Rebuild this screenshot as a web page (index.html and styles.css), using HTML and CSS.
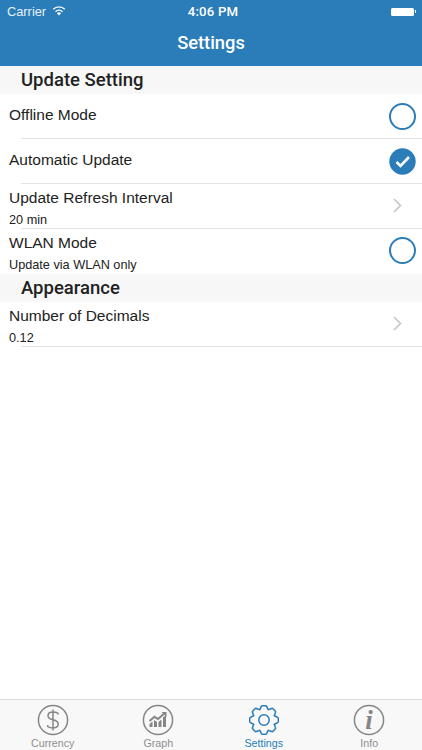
FILE: index.html
```html
<!DOCTYPE html>
<html lang="en">
<head>
<meta charset="utf-8">
<title>Settings</title>
<link rel="stylesheet" href="styles.css">
</head>
<body>
<div class="app">
  <header class="top">
    <div class="status">
      <div class="status-left">
        <span>Carrier</span>
        <svg class="wifi" viewBox="0 0 14 10" width="14" height="10"><path d="M7 9.6 4.9 7.3a3 3 0 0 1 4.2 0z" fill="#fff"/><path d="M3.5 5.7a5 5 0 0 1 7 0M1.2 3.3a8.2 8.2 0 0 1 11.6 0" fill="none" stroke="#fff" stroke-width="1.3"/></svg>
      </div>
      <div class="status-time">4:06 PM</div>
      <div class="status-right">
        <span class="battery"></span><span class="battery-tip"></span>
      </div>
    </div>
    <div class="title">Settings</div>
  </header>
  <main class="list">
    <div class="section">Update Setting</div>
    <div class="row row-single">
      <div class="text"><div class="label">Offline Mode</div></div>
      <span class="radio"></span>
    </div>
    <div class="row row-single">
      <div class="text"><div class="label">Automatic Update</div></div>
      <svg class="check" viewBox="0 0 27 27" width="27" height="27"><circle cx="13.5" cy="13.5" r="13.2" fill="#2a7db8"/><path d="M7.500 14l4 4 8.500-9" fill="none" stroke="#fff" stroke-width="2.600"/></svg>
    </div>
    <div class="row">
      <div class="text"><div class="label">Update Refresh Interval</div><div class="sub">20 min</div></div>
      <svg class="chev" viewBox="0 0 9 15" width="9" height="15"><path d="M1 1l6.5 6.5L1 14" fill="none" stroke="#c7c7cc" stroke-width="1.7"/></svg>
    </div>
    <div class="row row-last">
      <div class="text"><div class="label">WLAN Mode</div><div class="sub">Update via WLAN only</div></div>
      <span class="radio radio-up"></span>
    </div>
    <div class="section">Appearance</div>
    <div class="row">
      <div class="text"><div class="label">Number of Decimals</div><div class="sub">0.12</div></div>
      <svg class="chev" viewBox="0 0 9 15" width="9" height="15"><path d="M1 1l6.5 6.5L1 14" fill="none" stroke="#c7c7cc" stroke-width="1.7"/></svg>
    </div>
  </main>
  <nav class="tabs">
    <div class="tab">
      <svg viewBox="0 0 32 32" width="32" height="32"><circle cx="16" cy="16" r="14.6" fill="none" stroke="#868686" stroke-width="1.5"/><path d="M21 10.500V9.300c-1.200-.9-3-1.300-5-1.300-3 0-5 1.400-5 3.700 0 2.200 1.800 3.300 5 4.100 3.400.8 5.200 1.900 5.200 4.300 0 2.400-2.200 3.900-5.200 3.900-2.200 0-4-.4-5.300-1.500v-1.500M16 5.500v21" fill="none" stroke="#868686" stroke-width="1.500"/></svg>
      <span>Currency</span>
    </div>
    <div class="tab">
      <svg viewBox="0 0 32 32" width="32" height="32"><circle cx="16" cy="16" r="14.6" fill="none" stroke="#868686" stroke-width="1.5"/><path d="M7.500 17l5-4.200 3.500 2.200 6-5.300" fill="none" stroke="#868686" stroke-width="2"/><path d="M19.500 8h5v5z" fill="#868686"/><path d="M7.500 23v-3l3-2.500V23zM12 23v-7l3 2V23zM16.500 23v-5l3-2.500V23zM21 23v-9.500l3-2.500V23z" fill="#868686"/></svg>
      <span>Graph</span>
    </div>
    <div class="tab tab-on">
      <svg viewBox="-16 -16 32 32" width="32" height="32">
        <defs><path id="tooth" d="M10.400-4.300 12.800-3Q14.300-2.800 14.300-1.500V1.500Q14.300 2.800 12.800 3L10.400 4.300" fill="none" stroke="#2a7db8" stroke-width="1.500" stroke-linecap="round"/></defs>
        <use href="#tooth"/>
        <use href="#tooth" transform="rotate(45)"/>
        <use href="#tooth" transform="rotate(90)"/>
        <use href="#tooth" transform="rotate(135)"/>
        <use href="#tooth" transform="rotate(180)"/>
        <use href="#tooth" transform="rotate(225)"/>
        <use href="#tooth" transform="rotate(270)"/>
        <use href="#tooth" transform="rotate(315)"/>
        <circle cx="0" cy="0" r="5.200" fill="none" stroke="#2a7db8" stroke-width="1.500"/>
      </svg>
      <span>Settings</span>
    </div>
    <div class="tab">
      <svg viewBox="0 0 32 32" width="32" height="32"><circle cx="16" cy="16" r="14.6" fill="none" stroke="#868686" stroke-width="1.5"/><text class="info-i" x="16" y="25" text-anchor="middle">i</text></svg>
      <span>Info</span>
    </div>
  </nav>
</div>
</body>
</html>
```
FILE: styles.css
```css
* { box-sizing: border-box; }
html, body { margin: 0; padding: 0; }
body { font-family: "Liberation Sans", Arial, sans-serif; color: #222; background: #fff; }
.app { width: 422px; height: 750px; display: flex; flex-direction: column; overflow: hidden; }
.top { height: 66px; background: #2a7db8; color: #fff; flex: none; }
.status { height: 22px; padding: 1px 6px 0 7px; display: grid; grid-template-columns: 1fr auto 1fr; align-items: center; font-size: 12.800px; }
.status-left { display: flex; align-items: center; gap: 6px; color: #e8f1f8; }
.wifi { margin-top: -2px; }
.status-time { font-family: Roboto, "Liberation Sans", sans-serif; font-weight: 500; font-size: 13.200px; letter-spacing: .2px; margin-left: 3px; }
.status-right { display: flex; justify-content: flex-end; align-items: center; }
.battery { width: 23px; height: 8px; background: #fff; border-radius: 1.500px; }
.battery-tip { width: 1.500px; height: 3px; background: #fff; margin-left: 1px; }
.title { font-family: Roboto, "Liberation Sans", sans-serif; text-align: center; font-size: 18.300px; line-height: 42px; font-weight: 500; }
.list { flex: 1; }
.section { height: 28.400px; line-height: 29px; padding-left: 21px; background: #f7f7f7; font-family: Roboto, "Liberation Sans", sans-serif; font-size: 18.500px; font-weight: 500; color: #222; }
.row { height: 44.800px; display: flex; align-items: center; justify-content: space-between; padding: 3px 6px 0 9px; position: relative; }
.row::after { content: ""; position: absolute; left: 21px; right: 0; bottom: 0; height: 1px; background: #e3e3e6; }
.row-last::after { display: none; }
.row-single { align-items: flex-start; padding-top: 0; }
.row-single .text { padding-top: 11px; }
.row-single .radio, .row-single .check { margin-top: 9px; }
.text { display: flex; flex-direction: column; }
.label { font-size: 15.500px; line-height: 20px; color: #222; }
.sub { font-size: 12.700px; line-height: 15px; margin-top: 5px; color: #222; }
.radio { width: 27px; height: 27px; border: 2px solid #2a7db8; border-radius: 50%; flex: none; }
.radio-up { margin-bottom: 4px; }
.check { flex: none; }
.chev { margin-right: 14px; margin-bottom: 5px; flex: none; }
.tabs { height: 51px; flex: none; display: grid; grid-template-columns: repeat(4, 1fr); background: #f8f8f8; border-top: 1px solid #dcdcdc; }
.tab { display: flex; flex-direction: column; align-items: center; padding-top: 4px; font-size: 10.700px; line-height: 12px; color: #8f8f8f; gap: 1px; }
.tab-on { color: #2a7db8; }
.info-i { font-family: "Liberation Serif", serif; font-style: italic; font-weight: 700; font-size: 27px; fill: #868686; }
```
